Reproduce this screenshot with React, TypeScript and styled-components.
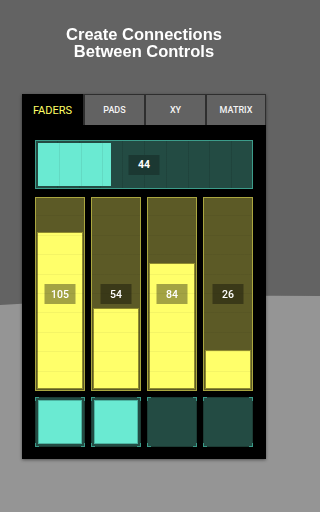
import styled, { createGlobalStyle } from "styled-components";

const GlobalStyle = createGlobalStyle`
  html, body {
    margin: 0;
    padding: 0;
    background: #636363;
  }
  #root {
    min-width: 288px;
    height: 512px;
  }
`;

const TABS = ["FADERS", "PADS", "XY", "MATRIX"];
const FADERS = [105, 54, 84, 26];
const PADS = [true, true, false, false];
const H_VALUE = 44;

export default function App() {
  return (
    <Screen>
      <GlobalStyle />
      <Backdrop viewBox="0 0 288 512" preserveAspectRatio="none">
        <path d="M0 305 Q150 294 288 296 L288 512 L0 512 Z" fill="#959595" />
      </Backdrop>

      <Title>
        Create Connections
        <br />
        Between Controls
      </Title>

      <Panel>
        <TabBar>
          {TABS.map((t, i) => (
            <Tab key={t} $active={i === 0}>
              {t}
            </Tab>
          ))}
        </TabBar>

        <Body>
          <HFader>
            <HFill style={{ width: `${(H_VALUE / 127) * 100}%` }} />
            <Value $dark>{H_VALUE}</Value>
          </HFader>

          <FaderRow>
            {FADERS.map((v, i) => (
              <Track key={i}>
                <Fill style={{ height: `${(v / 127) * 100}%` }} />
                <Value>{v}</Value>
              </Track>
            ))}
          </FaderRow>

          <PadRow>
            {PADS.map((on, i) => (
              <Pad key={i}>
                <PadFace $on={on} />
              </Pad>
            ))}
          </PadRow>
        </Body>
      </Panel>
    </Screen>
  );
}

const Screen = styled.div`
  position: relative;
  width: 100%;
  min-width: 288px;
  height: 512px;
  overflow: hidden;
  display: flex;
  flex-direction: column;
  font-family: Roboto, "Liberation Sans", sans-serif;
`;

const Backdrop = styled.svg`
  position: fixed;
  top: 0;
  left: 0;
  width: max(100vw, 288px);
  height: 512px;
  z-index: 0;
`;

const Title = styled.h1`
  position: relative;
  z-index: 1;
  width: 288px;
  margin: 26px 0 0;
  font-family: "Liberation Sans", Arial, sans-serif;
  font-weight: 700;
  font-size: 16.5px;
  line-height: 17px;
  color: #ffffff;
  text-align: center;
`;

const Panel = styled.section`
  position: relative;
  z-index: 1;
  margin: 34px 0 0 22px;
  width: 244px;
  height: 365px;
  background: #000;
  box-shadow: 0 1px 3px rgba(0, 0, 0, 0.45);
  display: flex;
  flex-direction: column;
`;

const TabBar = styled.nav`
  display: grid;
  grid-template-columns: repeat(4, 1fr);
  height: 31px;
`;

const Tab = styled.div<{ $active?: boolean }>`
  display: flex;
  align-items: center;
  justify-content: center;
  box-sizing: border-box;
  background: ${(p) => (p.$active ? "#000" : "#626262")};
  color: ${(p) => (p.$active ? "#ffff66" : "#f4f4f4")};
  font-size: ${(p) => (p.$active ? "11px" : "9px")};
  font-weight: ${(p) => (p.$active ? 400 : 500)};
  border-top: 1px solid ${(p) => (p.$active ? "#000" : "#2e2e2e")};
  border-left: ${(p) => (p.$active ? "none" : "2px solid #2e2e2e")};
  &:last-child {
    border-right: 1px solid #2e2e2e;
  }
`;

const Body = styled.div`
  flex: 1;
  display: flex;
  flex-direction: column;
  padding: 15px 13px 12px;
`;

const Value = styled.span<{ $dark?: boolean }>`
  position: absolute;
  left: 50%;
  top: 50%;
  transform: translate(-50%, -50%);
  z-index: 2;
  width: 31px;
  height: 20px;
  display: flex;
  align-items: center;
  justify-content: center;
  background: ${(p) => (p.$dark ? "#1b3832" : "rgba(0, 0, 0, 0.36)")};
  color: #fff;
  font-size: 10.5px;
  font-weight: ${(p) => (p.$dark ? 700 : 500)};
`;

const HFader = styled.div`
  position: relative;
  box-sizing: border-box;
  height: 49px;
  padding: 2px;
  border: 1px solid #3c9c8a;
  background-color: #234b43;
  background-image: repeating-linear-gradient(
    to right,
    transparent 0,
    transparent 20.8px,
    rgba(0, 0, 0, 0.1) 20.8px,
    rgba(0, 0, 0, 0.1) 21.8px
  );
  display: flex;
`;

const HFill = styled.div`
  height: 100%;
  background-color: #6aead2;
  background-image: repeating-linear-gradient(
    to right,
    transparent 0,
    transparent 20.8px,
    rgba(0, 0, 0, 0.07) 20.8px,
    rgba(0, 0, 0, 0.07) 21.8px
  );
`;

const FaderRow = styled.div`
  display: grid;
  grid-template-columns: repeat(4, 1fr);
  gap: 6px;
  margin-top: 8px;
  height: 194px;
`;

const Track = styled.div`
  position: relative;
  box-sizing: border-box;
  padding: 1px;
  border: 1px solid #aaa63f;
  background: #5c5a26;
  display: flex;
  flex-direction: column;
  justify-content: flex-end;
  &::after {
    content: "";
    position: absolute;
    inset: 0;
    pointer-events: none;
    background-image: repeating-linear-gradient(
      to top,
      transparent 0,
      transparent 18.4px,
      rgba(0, 0, 0, 0.045) 18.4px,
      rgba(0, 0, 0, 0.045) 19.4px
    );
  }
`;

const Fill = styled.div`
  box-sizing: border-box;
  border: 1px solid #8e8a30;
  background: #ffff6a;
`;

const PadRow = styled.div`
  display: grid;
  grid-template-columns: repeat(4, 1fr);
  gap: 6px;
  margin-top: 6px;
  height: 50px;
`;

const corner = "#3a9a88";

const Pad = styled.div`
  position: relative;
  box-sizing: border-box;
  padding: 2px;
  border: 1px solid #1c3b34;
  background: #234b43;
  display: flex;
  &::after {
    content: "";
    position: absolute;
    inset: -1px;
    pointer-events: none;
    background:
      linear-gradient(${corner}, ${corner}) top left / 4px 1px no-repeat,
      linear-gradient(${corner}, ${corner}) top left / 1px 4px no-repeat,
      linear-gradient(${corner}, ${corner}) top right / 4px 1px no-repeat,
      linear-gradient(${corner}, ${corner}) top right / 1px 4px no-repeat,
      linear-gradient(${corner}, ${corner}) bottom left / 4px 1px no-repeat,
      linear-gradient(${corner}, ${corner}) bottom left / 1px 4px no-repeat,
      linear-gradient(${corner}, ${corner}) bottom right / 4px 1px no-repeat,
      linear-gradient(${corner}, ${corner}) bottom right / 1px 4px no-repeat;
  }
`;

const PadFace = styled.div<{ $on: boolean }>`
  flex: 1;
  box-sizing: border-box;
  background: ${(p) => (p.$on ? "#6aead2" : "transparent")};
  border: 1px solid ${(p) => (p.$on ? "#4db5a2" : "transparent")};
`;
